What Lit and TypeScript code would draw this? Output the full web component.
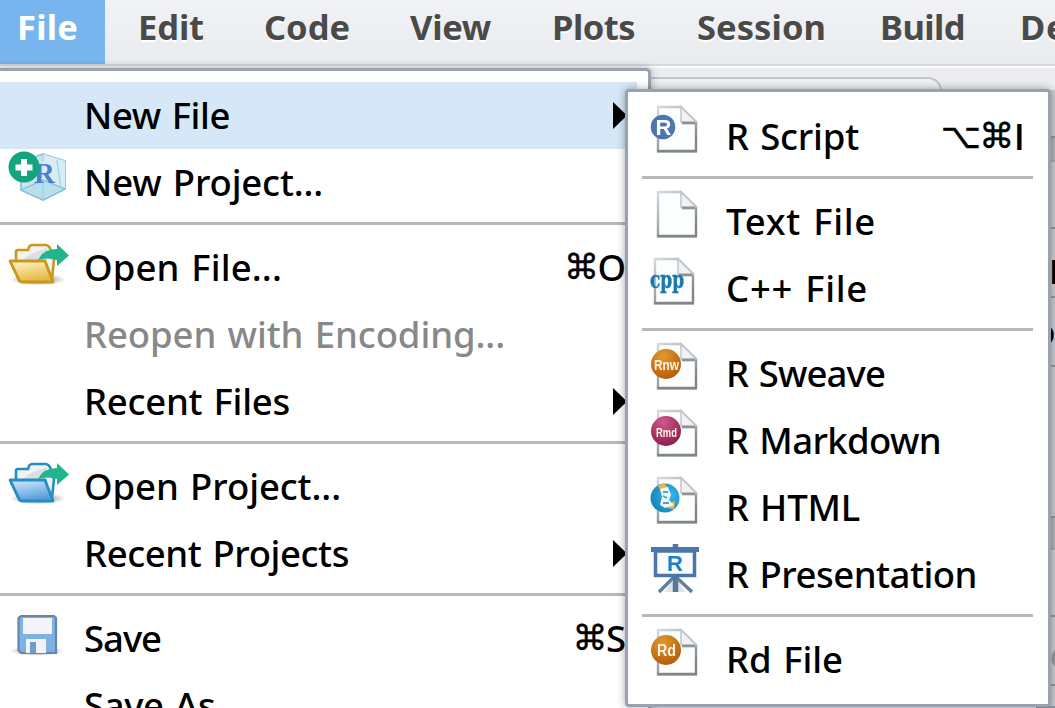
import { LitElement, html, svg, css } from "lit";
import { customElement, property } from "lit/decorators.js";
import { classMap } from "lit/directives/class-map.js";
import { styleMap } from "lit/directives/style-map.js";

/** A text run whose tracking is adjusted so that it takes up a given advance. */
@customElement("tracked-label")
class TrackedLabel extends LitElement {
  @property() text = "";
  @property({ type: Number }) advance = 0;
  static styles = css`
    :host { display: block; white-space: pre; word-spacing: 2px; }
    .run { display: inline-block; }
  `;
  render() {
    return html`<span class="run">${this.text}</span>`;
  }
  updated() {
    const run = this.renderRoot.querySelector(".run") as HTMLElement;
    run.style.letterSpacing = "0px";
    const natural = run.getBoundingClientRect().width;
    run.style.letterSpacing = (this.advance - natural) / this.text.length + "px";
  }
}

const page = svg`
  <path d="M7 1H30L45 16V45H7Z" fill="#fcfdfd" stroke="url(#edge)" stroke-width="2.4"/>
  <path d="M30 1V16H45Z" fill="#f1f2f4" stroke="#c3c9ce" stroke-width="1.6"/>
  <path d="M31 17H44" stroke="#8d9296" stroke-width="2.6"/>
  <path d="M6 45.3H46" stroke="#7f8589" stroke-width="2.6"/>`;

const docIcon = (badge: unknown) => html`
  <svg width="48" height="48" viewBox="0 0 48 48">
    <defs>
      <linearGradient id="edge" x1="0" y1="0" x2="0.6" y2="1">
        <stop offset="0" stop-color="#d3dbe2"/><stop offset="1" stop-color="#7f8589"/>
      </linearGradient>
      <radialGradient id="orange" cx="0.4" cy="0.25" r="0.8">
        <stop offset="0" stop-color="#e29a2c"/><stop offset="1" stop-color="#b35a09"/>
      </radialGradient>
      <radialGradient id="wine" cx="0.4" cy="0.2" r="0.8">
        <stop offset="0" stop-color="#d0588a"/><stop offset="1" stop-color="#8f1f50"/>
      </radialGradient>
      <radialGradient id="globe" cx="0.7" cy="0.4" r="0.8">
        <stop offset="0" stop-color="#35b4e8"/><stop offset="1" stop-color="#1580b8"/>
      </radialGradient>
    </defs>
    ${page}${badge}
  </svg>`;

const disc = (fill: string, label: string, size: number, width: number) => svg`
  <circle cx="15" cy="21" r="15" fill=${`url(#${fill})`}/>
  <text class="badge" x=${15.5 - width / 2} y="26.500" font-size=${size} textLength=${width} lengthAdjust="spacingAndGlyphs" fill="#fff3e6">${label}</text>`;

const folder = (edge: string, id: string, top: string, bottom: string) => html`
  <svg width="60" height="48" viewBox="0 0 60 48">
    <defs>
      <linearGradient id=${id} x1="0" y1="0" x2="0.3" y2="1">
        <stop offset="0" stop-color=${top}/><stop offset="1" stop-color=${bottom}/>
      </linearGradient>
      <radialGradient id="shade"><stop offset="0" stop-color="#444" stop-opacity=".9"/><stop offset="1" stop-color="#777" stop-opacity="0"/></radialGradient>
    </defs>
    <ellipse cx="29" cy="42.500" rx="28" ry="6" fill="url(#shade)"/>
    <path d="M7 23V15Q7 13 9 13H19Q20 8 23 8H37Q41 9 42 14L45 23L43 42H14Z" fill="#f2f2f5" stroke=${edge} stroke-width="2.6"/>
    <path d="M22 17L38 11V23H13Z" fill="#dcdee6"/>
    <path d="M1 24H36L44 45H14Q11 45 10 43Z" fill=${`url(#${id})`} stroke=${edge} stroke-width="2.8" stroke-linejoin="round"/>
    <path d="M29 23Q34 12 48 12V7L60 18.5L48 29V23Q38 20 29 23Z" fill="#20b58c"/>
  </svg>`;

const icons: Record<string, () => unknown> = {
  none: () => "",
  project: () => html`
    <svg width="60" height="48" viewBox="0 0 60 48">
      <path d="M34 2L56 9V37L34 48L12 38V10Z" fill="#c9e5f2" stroke="#8cc8da" stroke-width="1.8"/>
      <path d="M34 2L56 9V37L34 28Z" fill="#d7ecf5"/>
      <path d="M12 38L34 28L56 37L34 48Z" fill="#b9deec" stroke="#83c1d2" stroke-width="1.3"/>
      <path d="M34 2V9M34 28V48M48 8L52 37" stroke="#9fd0e0" stroke-width="1.2"/>
      <text class="serif" x="25" y="30.500" font-size="29" fill="#4a80cc">R</text>
      <circle cx="15" cy="15" r="15.500" fill="#13a57c"/>
      <path d="M12 7H18V12.5H23.5V18.5H18V24H12V18.5H6.5V12.5H12Z" fill="#fff"/>
    </svg>`,
  openFile: () => folder("#c9971b", "gold", "#fff6cf", "#e5ba47"),
  openProject: () => folder("#238ec4", "blue", "#d6ecff", "#579fdc"),
  save: () => html`
    <svg width="60" height="48" viewBox="0 0 60 48">
      <defs><radialGradient id="shade"><stop offset="0" stop-color="#555" stop-opacity=".85"/><stop offset="1" stop-color="#777" stop-opacity="0"/></radialGradient></defs>
      <ellipse cx="28" cy="43" rx="27" ry="5" fill="url(#shade)"/>
      <path d="M12 8H45L47 10V45H12L9.500 42V10Z" fill="#7db2e2" stroke="#6486ad" stroke-width="2.2"/>
      <path d="M14 10H43V26H14Z" fill="#f3f4f5"/>
      <path d="M17 31H37V45H17Z" fill="#f1f3f5"/>
      <path d="M21 34H27V45H21Z" fill="#6e9ccb"/>
    </svg>`,
  rScript: () => docIcon(svg`
    <circle cx="12" cy="21" r="12.300" fill="#4b76b2"/>
    <text class="badge" x="12.500" y="28.500" font-size="22" text-anchor="middle" fill="#fff">R</text>`),
  text: () => docIcon(""),
  cpp: () => html`
    <svg width="48" height="48" viewBox="0 0 48 48">
      <defs><linearGradient id="edge" x1="0" y1="0" x2="0.6" y2="1"><stop offset="0" stop-color="#d3dbe2"/><stop offset="1" stop-color="#7f8589"/></linearGradient></defs>
      <g transform="translate(-3 0)">${page}</g>
      <text class="slab" x="-1" y="30" font-size="24" textLength="34" lengthAdjust="spacingAndGlyphs" fill="#1a78ac" stroke="#1a78ac" stroke-width="0.5">cpp</text>
    </svg>`,
  sweave: () => docIcon(disc("orange", "Rnw", 15, 25)),
  markdown: () => docIcon(disc("wine", "Rmd", 13, 21)),
  rd: () => docIcon(disc("orange", "Rd", 16, 19)),
  rHtml: () => docIcon(svg`
    <circle cx="14" cy="21" r="14.500" fill="url(#globe)"/>
    <path d="M7 9L13 6L17 11L10 14ZM16 27L24 24L23 32L17 31Z" fill="#f0b93c"/>
    <path d="M9 12L17 10L20 18L18 23L23 28L14 31L9 28L11 20Z" fill="#eef7f5"/>
    <path d="M12 15H17M12 19L16 21M12 26H18" stroke="#4aa6cc" stroke-width="1.800"/>`),
  presentation: () => html`
    <svg width="48" height="48" viewBox="0 0 48 48">
      <path d="M20 38L14 48H34L28 38Z" fill="#e1e4e7"/>
      <path d="M24 32L8 48M24 32L41 48" stroke="#637f9d" stroke-width="3.500"/>
      <path d="M24.500 0V5M24.500 32V48" stroke="#587796" stroke-width="5.500"/>
      <path d="M4.500 7H43.500V31.500H4.500Z" fill="#fafcfe" stroke="#4a76aa" stroke-width="3.500"/>
      <path d="M0 3H48V8H0Z" fill="#4a76aa"/>
      <text class="badge" x="24" y="26.500" font-size="22" text-anchor="middle" fill="#1c7fca">R</text>
    </svg>`,
};

interface Item {
  label?: string;
  advance?: number;
  icon?: string;
  keys?: string;
  sub?: boolean;
  selected?: boolean;
  disabled?: boolean;
}

const fileMenu: Item[] = [
  { label: "New File", advance: 146, sub: true, selected: true },
  { label: "New Project...", advance: 239, icon: "project" },
  {},
  { label: "Open File...", advance: 198, icon: "openFile", keys: "⌘O" },
  { label: "Reopen with Encoding...", advance: 421, disabled: true },
  { label: "Recent Files", advance: 206, sub: true },
  {},
  { label: "Open Project...", advance: 257, icon: "openProject" },
  { label: "Recent Projects", advance: 265, sub: true },
  {},
  { label: "Save", advance: 77, icon: "save", keys: "⌘S" },
  { label: "Save As...", advance: 160 },
];

const newFileMenu: Item[] = [
  { label: "R Script", advance: 133, icon: "rScript", keys: "⌥⌘I" },
  {},
  { label: "Text File", advance: 150, icon: "text" },
  { label: "C++ File", advance: 142, icon: "cpp" },
  {},
  { label: "R Sweave", advance: 159, icon: "sweave" },
  { label: "R Markdown", advance: 215, icon: "markdown" },
  { label: "R HTML", advance: 134, icon: "rHtml" },
  { label: "R Presentation", advance: 251, icon: "presentation" },
  {},
  { label: "Rd File", advance: 117, icon: "rd" },
];

const keyClass = (k: string) => (k > "z" ? "sym" : k === "I" ? "bar" : "");

@customElement("menu-panel")
class MenuPanel extends LitElement {
  @property({ attribute: false }) items: Item[] = [];
  static styles = css`
    :host { display: block; box-sizing: border-box; }
    .row { display: flex; align-items: flex-start; height: 67px; box-sizing: border-box; color: #000; }
    .row.selected { background: #d6e8f7; }
    .row.disabled { color: #888; }
    .icon { flex: none; width: 75px; height: 48px; margin: 3px 0 0 9px; }
    .icon svg { display: block; overflow: visible; filter: blur(0.5px); }
    tracked-label { flex: 1; line-height: 67px; font-size: 36.5px; font-weight: 500; }
    .keys { display: flex; font-size: 36.5px; line-height: 67px; font-weight: 500; height: 67px; margin-right: 11px; }
    .sym { font-family: "DejaVu Sans", sans-serif; font-size: 35px; font-weight: 400; letter-spacing: -1.5px; -webkit-text-stroke: 0.4px #000; }
    .bar { font-family: "Open Sans", sans-serif; margin: 0 -3px 0 1px; font-weight: 600; }
    .arrow { width: 14px; height: 27px; margin: 20px 10px 0 0; background: #000; clip-path: polygon(0 0, 14px 13.5px, 0 27px); }
    .rule { height: 3px; margin: 6px 0 9px; background: #b8b8b8; }
    .badge { font-family: "Liberation Sans", sans-serif; font-weight: 700; }
    .serif { font-family: "Liberation Serif", serif; font-weight: 700; }
    .slab { font-family: "DejaVu Serif", serif; font-weight: 700; }
  `;
  render() {
    return this.items.map((i) =>
      i.label
        ? html`<div class=${classMap({ row: true, selected: !!i.selected, disabled: !!i.disabled })}>
            <div class="icon">${icons[i.icon ?? "none"]()}</div>
            <tracked-label .text=${i.label} .advance=${i.advance ?? 0}></tracked-label>
            ${i.keys
              ? html`<div class="keys">${[...i.keys].map((k) => html`<span class=${keyClass(k)}>${k}</span>`)}</div>`
              : ""}
            ${i.sub ? html`<div class="arrow"></div>` : ""}
          </div>`
        : html`<div class="rule"></div>`
    );
  }
}

const bar = [
  { label: "File", pad: 17, width: 105, advance: 61 },
  { label: "Edit", pad: 33, width: 126, advance: 66 },
  { label: "Code", pad: 33, width: 146, advance: 86 },
  { label: "View", pad: 33, width: 142, advance: 81 },
  { label: "Plots", pad: 33, width: 145, advance: 83 },
  { label: "Session", pad: 33, width: 183, advance: 129 },
  { label: "Build", pad: 33, width: 141, advance: 85 },
  { label: "Debug", pad: 32, width: 150, advance: 116 },
];

@customElement("app-root")
class AppRoot extends LitElement {
  static styles = css`
    :host {
      display: block; position: relative; width: 1055px; height: 708px; overflow: hidden;
      background: #ecedf1; font-family: "Noto Sans", "Open Sans", sans-serif;
    }
    .bar { display: flex; height: 64px; background: linear-gradient(#f1f2f5, #e9ebef); border-bottom: 2px solid #d7d9de; box-shadow: 0 2px #fafafc; }
    .entry { flex: none; box-sizing: border-box; height: 64px; font-size: 34.5px; font-weight: 700; line-height: 53px; color: #4a4a4a; text-shadow: 0 2px #fff; }
    .entry.open { background: #78b5ef; color: #fff; text-shadow: none; }
    .tab { box-sizing: border-box; width: 942px; height: 40px; margin-top: 11px; border: 2px solid #c3c6ce; border-radius: 0 14px 0 0; background: #f0f1f4; }
    .side { position: absolute; left: 1036px; top: 90px; width: 19px; height: 618px; display: grid; grid-template-rows: 48px 24px 67px 69px 69px 151px 32px 67px 69px 1fr; background: #c8c9cd; overflow: hidden; }
    .cell { border-bottom: 2px solid #9297a0; box-sizing: border-box; background: #cbccd0; font-size: 34px; line-height: 66px; overflow: hidden; white-space: nowrap; }
    .cell.head { background: #b2b4b8; border-color: #a8aaae; }
    .cell.stem { padding-left: 13px; font-weight: 700; line-height: 84px; }
    .cell.bowl { padding-left: 0; line-height: 68px; font-size: 32px; }
    .cell.dim { padding-left: 14px; color: #999; font-weight: 700; line-height: 76px; }
    .menu, .submenu { position: absolute; background: #fff; border: 3px solid #9aa1b0; }
    .menu { left: -3px; top: 68px; width: 654px; height: 700px; padding: 11px 11px 0 0; border-radius: 0 5px 0 0; box-shadow: 0 0 8px rgba(0,0,0,.3); }
    .submenu { left: 625px; top: 89px; width: 426px; height: 618px; padding: 11px 15px 0 14px; border-radius: 4px; box-shadow: 0 0 9px rgba(0,0,0,.35); }
  `;
  render() {
    const cells = [
      ["", ""], ["head", ""], ["", ""], ["stem", "F"], ["bowl", "o"],
      ["", ""], ["head", ""], ["", ""], ["dim", "e"], ["", ""],
    ];
    return html`
      <div class="bar">
        ${bar.map((b, n) => html`<div class=${classMap({ entry: true, open: n === 0 })}
          style=${styleMap({ width: b.width + "px", paddingLeft: b.pad + "px" })}>
          <tracked-label .text=${b.label} .advance=${b.advance}></tracked-label></div>`)}
      </div>
      <div class="tab"></div>
      <div class="side">${cells.map(([kind, text]) => html`<div class=${"cell " + kind}>${text}</div>`)}</div>
      <menu-panel class="menu" .items=${fileMenu}></menu-panel>
      <menu-panel class="submenu" .items=${newFileMenu}></menu-panel>`;
  }
}
